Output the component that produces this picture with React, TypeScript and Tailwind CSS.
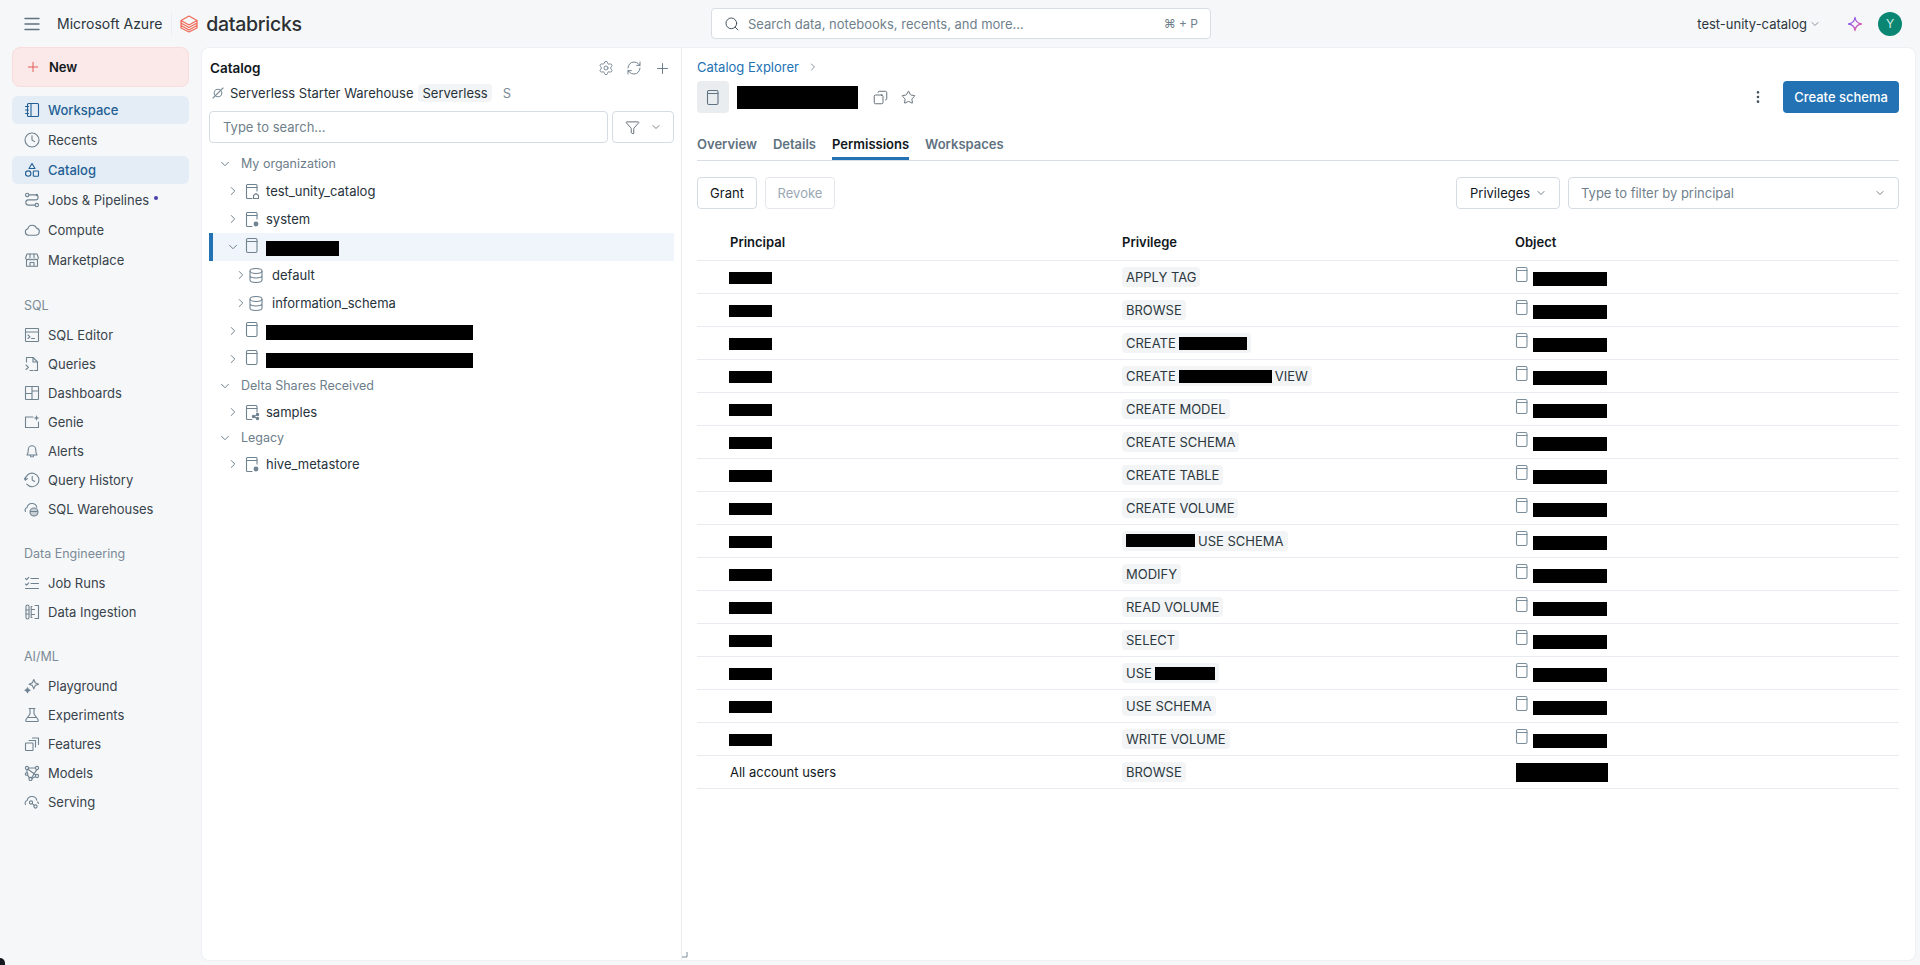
import React from "react";
import { ChevronDown, ChevronRight, Search, Settings, RefreshCw, Plus, Filter, Copy, Star, EllipsisVertical } from "lucide-react";

type IP = { className?: string };
const Svg = ({ className = "", children, size = 16 }: IP & { children: React.ReactNode; size?: number }) => (
  <svg width={size} height={size} viewBox="0 0 16 16" fill="none" stroke="currentColor" strokeWidth={1.1} strokeLinecap="round" strokeLinejoin="round" className={`shrink-0 ${className}`}>
    {children}
  </svg>
);

const I: Record<string, React.ReactNode> = {
  workspace: (<><rect x="3.5" y="1.5" width="11" height="13" rx="1" /><path d="M7 1.5v13M1.5 4.5h3M1.5 8h3M1.5 11.5h3" /></>),
  recents: (<><circle cx="8" cy="8" r="7" /><path d="M8 3.8V8l2.6 1.6" /></>),
  catalog: (<><path d="M8 1.5l3 5H5z" /><circle cx="4.2" cy="11.6" r="2.7" /><rect x="9.3" y="9" width="5.2" height="5.2" rx=".5" /></>),
  jobs: (<><circle cx="3.2" cy="2.9" r="1.7" /><circle cx="12.8" cy="13.1" r="1.7" /><path d="M5 2.9h6.6a2.5 2.5 0 0 1 0 5H4.4a2.6 2.6 0 0 0 0 5.2H11" /><circle cx="12.8" cy="3" r=".6" /></>),
  compute: (<path d="M4.4 13.2a3.3 3.3 0 0 1-.5-6.5 4.5 4.5 0 0 1 8.6-.6 3.6 3.6 0 0 1-.4 7.1z" />),
  market: (<><path d="M2.5 7.5v6.8h11V7.5" /><path d="M3 2h10l1.4 3.8a1.9 1.9 0 0 1-3.2 1.3 2.3 2.3 0 0 1-3.2 0 2.3 2.3 0 0 1-3.2 0A1.9 1.9 0 0 1 1.6 5.8z" /><path d="M6 2v4M10 2v4M6 14v-3.500h4V14" /></>),
  editor: (<><rect x="1.500" y="1.500" width="13" height="13" rx=".5" /><path d="M1.500 5h13M4 8l2 1.800L4 11.500M7.500 11.500h3" /></>),
  queries: (<><path d="M2.500 6V1.500h6.500l4.500 4.500v8.500h-3" /><path d="M9 1.500V6h4.500M2 9l2.500 2.300L2 13.500M6 14.500h3" /></>),
  dashboards: (<><rect x="1.500" y="1.500" width="13" height="13" rx=".5" /><path d="M8 1.500v13M1.500 8.500H8M8 6h6.500" /></>),
  genie: (<><path d="M9 3H1.500v10.500h13V8" /><path d="M12.500 1l.8 2.200 2.200.8-2.200.8-.8 2.200-.8-2.200-2.200-.8 2.200-.8z" fill="currentColor" stroke="none" /></>),
  alerts: (<><path d="M3 12c1-1 1.300-2.200 1.300-5.500a3.700 3.700 0 0 1 7.400 0c0 3.300.3 4.500 1.300 5.500z" /><path d="M6.200 12.200a1.800 1.800 0 0 0 3.600 0" /></>),
  history: (<><path d="M1.300 8a6.800 6.800 0 1 1 1.500 4.200" /><path d="M0 6l1.400 2 2-1.400M8.200 4.400V8l2.500 1.400" /></>),
  warehouses: (<><path d="M1.500 10.500a2.700 2.700 0 0 1 1.600-4 5 5 0 0 1 9.700-.4" /><circle cx="10" cy="11" r="4" fill="currentColor" fillOpacity=".35" /><path d="M6.500 10.500h7" /></>),
  jobruns: (<path d="M1.500 3.500l1.200 1.200 2-2.300M1.500 9l1.200 1.200 2-2.300M7 3.500h7.500M7 8.500h7.500M1.500 13.500h13" />),
  ingestion: (<><path d="M2 2.500a1.500 1.500 0 0 1 3 0v11a1.500 1.500 0 0 1-3 0zM1.700 6h3.600M1.700 10h3.600M8 2.500h-.8v11H8M11 1.500h3.500v13H11" /><path d="M7.500 5.500h3M7.500 10.500h3" /></>),
  playground: (<><path d="M9.800 1.500l1.400 3.300 3.300 1.400-3.300 1.400-1.400 3.300-1.400-3.300-3.300-1.400 3.300-1.400z" /><path d="M3.500 9.800l.8 1.700 1.700.8-1.700.8-.8 1.700-.8-1.700-1.700-.8 1.700-.8z" fill="currentColor" /></>),
  experiments: (<><path d="M5 1.500h6M6 1.500v5.500L2 12.500c-.7 1.100-.1 2 1 2h10c1.100 0 1.700-.9 1-2L10 7V1.500" /><path d="M3.500 10.500h9" /></>),
  features: (<><rect x="1.500" y="7" width="7.500" height="7.500" rx=".5" /><path d="M5 4.500h6.500V11M8.500 2h6v6.500" /></>),
  models: (<><circle cx="3" cy="3" r="1.600" /><circle cx="13" cy="3" r="1.600" /><circle cx="13" cy="11" r="1.600" /><circle cx="6.500" cy="14" r="1.600" /><circle cx="2.600" cy="9" r="1.300" /><path d="M4.600 3h6.800M4 4.200l7.800 5.800M12.800 4.600L7.600 12.800M3 7.700V4.600M3.500 10.200l2 2.600M8 13.500l3.500-1.900" /></>),
  serving: (<><path d="M1.500 10.500a2.700 2.700 0 0 1 1.600-4 5 5 0 0 1 9.700-.4" /><circle cx="7" cy="8.500" r="1.600" /><circle cx="11.500" cy="12.500" r="1.600" /><path d="M8.200 9.700l2 1.700M14.500 9.500a2 2 0 0 0-1-1.500" /></>),
};

const NavItem = ({ icon, label, active, dot, h }: { icon: string; label: string; active?: boolean; dot?: boolean; h: string }) => (
  <div className={`${h} flex items-center`}>
    <div className={`flex h-[28px] w-full items-center gap-[8px] rounded-[6px] pl-[12px] ${active ? "bg-[#e4edf5] text-[#235f94]" : "text-[#38434b]"}`}>
      <span className={active ? "text-[#235f94]" : "text-[#6f8290]"}><Svg>{I[icon]}</Svg></span>
      <span className={active ? "font-medium" : ""}>{label}</span>
      {dot && <span className="ml-[-3px] mt-[-4px] h-[4px] w-[4px] rounded-full bg-[#4b3fb0]" />}
    </div>
  </div>
);

const SectionLabel = ({ children }: { children: React.ReactNode }) => (
  <div className="flex h-[29px] items-center pl-[12px] text-[12.500px] text-[#7b8a96]">{children}</div>
);

const Bar = ({ w, h = 14, className = "" }: { w: number; h?: number; className?: string }) => (
  <span className={`inline-block shrink-0 bg-black ${className}`} style={{ width: w, height: h }} />
);

const CatalogIcon = ({ badge, className = "" }: { badge?: "home" | "gear" | "share"; className?: string }) => (
  <svg width="16" height="17" viewBox="0 0 16 17" fill="none" stroke="currentColor" strokeWidth={1.1} strokeLinecap="round" strokeLinejoin="round" className={`shrink-0 text-[#6f8290] ${className}`}>
    {badge ? <path d="M8 15.500H3.500a1 1 0 0 1-1-1V2.500a1 1 0 0 1 1-1h8.500a1 1 0 0 1 1 1V8" /> : <rect x="2.500" y="1.500" width="10.500" height="14" rx="1.500" />}
    <path d="M2.500 4.500h10.500" />
    {badge === "home" && <path d="M9.500 15.500v-3l2.500-2 2.500 2v3z" />}
    {badge === "gear" && <circle cx="12" cy="13" r="1.900" fill="currentColor" />}
    {badge === "share" && <><circle cx="13.500" cy="10.500" r="1.200" fill="currentColor" /><circle cx="13.500" cy="14.500" r="1.200" fill="currentColor" /><circle cx="9.500" cy="12.500" r="1.200" fill="currentColor" /><path d="M13 11l-3 1.500 3 2" /></>}
  </svg>
);

const DbIcon = () => (
  <svg width="16" height="17" viewBox="0 0 16 17" fill="none" stroke="currentColor" strokeWidth={1.1} className="shrink-0 text-[#6f8290]">
    <ellipse cx="8" cy="4" rx="6" ry="2.500" />
    <path d="M2 4v9c0 1.400 2.700 2.500 6 2.500s6-1.100 6-2.500V4M2 8.500c0 1.400 2.700 2.500 6 2.500s6-1.100 6-2.500" />
  </svg>
);

const Tree = ({ indent, open, icon, children, h = "h-[28px]", selected }: { indent: string; open?: boolean; icon: React.ReactNode; children: React.ReactNode; h?: string; selected?: boolean }) => (
  <div className={`${h} flex items-center ${indent} ${selected ? "border-l-[4px] border-[#2272b4] bg-[#eff5fa]" : ""}`}>
    {open ? <ChevronDown size={14} strokeWidth={1.500} className="text-[#5f7281]" /> : <ChevronRight size={14} strokeWidth={1.500} className="text-[#5f7281]" />}
    {icon}
    {children}
  </div>
);

const Heading = ({ children }: { children: React.ReactNode }) => (
  <div className="flex h-[26px] items-center gap-[9px] pl-[9px] text-[12.500px] text-[#6d7d8a]">
    <ChevronDown size={14} strokeWidth={1.500} className="text-[#5f7281]" />
    {children}
  </div>
);

type Part = string | number;
const rows: { chip: Part[]; noIcon?: boolean }[] = [
  { chip: ["APPLY TAG"] },
  { chip: ["BROWSE"] },
  { chip: ["CREATE", 68] },
  { chip: ["CREATE", 93, "VIEW"] },
  { chip: ["CREATE MODEL"] },
  { chip: ["CREATE SCHEMA"] },
  { chip: ["CREATE TABLE"] },
  { chip: ["CREATE VOLUME"] },
  { chip: [69, "USE SCHEMA"] },
  { chip: ["MODIFY"] },
  { chip: ["READ VOLUME"] },
  { chip: ["SELECT"] },
  { chip: ["USE", 60] },
  { chip: ["USE SCHEMA"] },
  { chip: ["WRITE VOLUME"] },
  { chip: ["BROWSE"], noIcon: true },
];

const Row = ({ chip, noIcon }: { chip: Part[]; noIcon?: boolean }) => (
  <div className="grid h-[33px] grid-cols-[425px_393px_1fr] items-center border-b border-[#e8ecf0]">
    <div className="pl-[32px]">
      {noIcon ? <span className="ml-[1px]">All account users</span> : <Bar w={43} h={12} className="mt-[6px] block" />}
    </div>
    <div>
      <span className="inline-flex h-[20px] items-center gap-[3px] rounded-[4px] bg-[#f2f4f6] px-[4px] text-[#2c3840]">
        {chip.map((p, i) => (typeof p === "number" ? <Bar key={i} w={p} h={13} /> : <span key={i}>{p}</span>))}
      </span>
    </div>
    <div className="flex items-center">
      {noIcon ? <Bar w={92} h={19} className="ml-[1px]" /> : <><CatalogIcon className="ml-[-1px] mt-[-6px] !text-[#7c8e9b]" /><Bar w={74} h={14} className="ml-[3px] mt-[3px]" /></>}
    </div>
  </div>
);

export default function App() {
  return (
    <div className="relative flex h-[965px] w-[1920px] flex-col overflow-hidden bg-[#f6f7f9] text-[13px] leading-[18px] text-[#11171c]" style={{ fontFamily: "Inter, 'Noto Sans', sans-serif" }}>
      <header className="flex h-[47px] shrink-0 items-center">
        <div className="flex w-[700px] items-center pl-[24px]">
          <svg width="16" height="14" viewBox="0 0 16 14" fill="none" stroke="#5f7281" strokeWidth={1.400} strokeLinecap="round" className="shrink-0"><path d="M1 1.500h14M1 7h14M1 12.500h14" /></svg>
          <span className="ml-[17px] text-[14px] text-[#2b353c]">Microsoft Azure</span>
          <span className="ml-[9px] h-[24px] w-px bg-[#eceff2]" />
          <svg width="18" height="18" viewBox="0 0 18 18" fill="none" stroke="#ef6a57" strokeWidth={1.200} strokeLinejoin="round" className="ml-[8px] shrink-0"><path d="M9 1L17 5.500 9 10 1 5.500zM1 5.500v2.500l8 4.500 8-4.500V5.500M1 8v2.500L9 15l8-4.500V8M1 10.500V13l8 4 8-4v-2.500" /></svg>
          <span className="ml-[8px] text-[19.500px] font-medium tracking-[-0.300px] text-[#2b2f33]">databricks</span>
        </div>
        <div className="ml-[11px] flex h-[31px] w-[500px] items-center rounded-[4px] border border-[#d8dee4] bg-white pl-[12px] pr-[12px] text-[#6f7f8c]">
          <Search size={16} strokeWidth={1.500} className="text-[#45535e]" />
          <span className="ml-[8px] flex-1">Search data, notebooks, recents, and more...</span>
          <span className="text-[12px]">⌘ + P</span>
        </div>
        <div className="ml-auto flex items-center pr-[18px]">
          <span className="text-[#2b353c]">test-unity-catalog</span>
          <ChevronDown size={12} strokeWidth={1.500} className="ml-[2px] text-[#5f7281]" />
          <svg width="16" height="16" viewBox="0 0 16 16" fill="none" strokeWidth={1.300} strokeLinejoin="round" className="ml-[26px]">
            <defs><linearGradient id="sp" x1="2" y1="2" x2="14" y2="14" gradientUnits="userSpaceOnUse"><stop offset="0" stopColor="#6a5cf0" /><stop offset=".5" stopColor="#b45ad8" /><stop offset="1" stopColor="#ef5a8a" /></linearGradient></defs>
            <path d="M8 1.500C8.500 5.500 10.500 7.500 14.500 8 10.500 8.500 8.500 10.500 8 14.500 7.500 10.500 5.500 8.500 1.500 8 5.500 7.500 7.500 5.500 8 1.500z" stroke="url(#sp)" />
          </svg>
          <span className="ml-[15px] flex h-[24px] w-[24px] items-center justify-center rounded-full bg-[#0a8673] text-[12px] text-[#d5efe9]">Y</span>
        </div>
      </header>
      <div className="flex min-h-0 flex-1 pb-[4px] pr-[4px]">
        <aside className="w-[201px] shrink-0 px-[12px]">
          <div className="flex h-[40px] items-center gap-[8px] rounded-[8px] border border-[#fbdcdc] bg-[#fbe8e8] pl-[12px] font-semibold">
            <Plus size={16} strokeWidth={1.400} className="text-[#e2554f]" />
            <span>New</span>
          </div>
          <div className="mt-[8px]">
            <NavItem h="h-[30px]" icon="workspace" label="Workspace" active />
            <NavItem h="h-[30px]" icon="recents" label="Recents" />
            <NavItem h="h-[30px]" icon="catalog" label="Catalog" active />
            <NavItem h="h-[30px]" icon="jobs" label="Jobs & Pipelines" dot />
            <NavItem h="h-[30px]" icon="compute" label="Compute" />
            <NavItem h="h-[30px]" icon="market" label="Marketplace" />
          </div>
          <div className="mt-[16px]"><SectionLabel>SQL</SectionLabel></div>
          <NavItem h="h-[29px]" icon="editor" label="SQL Editor" />
          <NavItem h="h-[29px]" icon="queries" label="Queries" />
          <NavItem h="h-[29px]" icon="dashboards" label="Dashboards" />
          <NavItem h="h-[29px]" icon="genie" label="Genie" />
          <NavItem h="h-[29px]" icon="alerts" label="Alerts" />
          <NavItem h="h-[29px]" icon="history" label="Query History" />
          <NavItem h="h-[29px]" icon="warehouses" label="SQL Warehouses" />
          <div className="mt-[16px]"><SectionLabel>Data Engineering</SectionLabel></div>
          <NavItem h="h-[29px]" icon="jobruns" label="Job Runs" />
          <NavItem h="h-[29px]" icon="ingestion" label="Data Ingestion" />
          <div className="mt-[16px]"><SectionLabel>AI/ML</SectionLabel></div>
          <NavItem h="h-[29px]" icon="playground" label="Playground" />
          <NavItem h="h-[29px]" icon="experiments" label="Experiments" />
          <NavItem h="h-[29px]" icon="features" label="Features" />
          <NavItem h="h-[29px]" icon="models" label="Models" />
          <NavItem h="h-[29px]" icon="serving" label="Serving" />
        </aside>
        <div className="flex min-w-0 flex-1 rounded-[8px] border border-[#eef0f3] bg-white">
          <section className="relative w-[480px] shrink-0 border-r border-[#eaedf0] px-[7px]">
            <div className="flex h-[28px] items-center justify-between pl-[1px] pr-[3px] pt-[12px]">
              <span className="text-[13.500px] font-semibold">Catalog</span>
              <span className="flex items-center gap-[12px] text-[#5f7281]">
                <Settings size={16} strokeWidth={1.200} />
                <RefreshCw size={16} strokeWidth={1.300} />
                <Plus size={17} strokeWidth={1.300} />
              </span>
            </div>
            <div className="mt-[8px] flex h-[18px] items-center pl-[3px] text-[#27323a]">
              <svg width="12" height="12" viewBox="0 0 12 12" fill="none" stroke="#7c8e9b" strokeWidth={1.100} strokeLinecap="round" className="shrink-0"><circle cx="6" cy="6" r="3.800" /><path d="M1 11L11 1" /></svg>
              <span className="ml-[6px]">Serverless Starter Warehouse</span>
              <span className="ml-[5px] rounded-[4px] bg-[#f2f4f6] px-[4px]">Serverless</span>
              <span className="ml-[11px] text-[#7b8a96]">S</span>
            </div>
            <div className="mt-[9px] flex h-[32px] gap-[4px]">
              <div className="flex flex-1 items-center rounded-[4px] border border-[#d5dce3] pl-[13px] text-[#6f7f8c]">Type to search...</div>
              <div className="flex w-[62px] items-center justify-center gap-[10px] rounded-[4px] border border-[#d5dce3]">
                <Filter size={15} strokeWidth={1.300} className="text-[#45535e]" />
                <ChevronDown size={12} strokeWidth={1.500} className="text-[#45535e]" />
              </div>
            </div>
            <div className="mt-[8px] text-[#27323a]">
              <Heading>My organization</Heading>
              <Tree indent="pl-[17px]" icon={<CatalogIcon badge="home" className="ml-[4px] mr-[6px]" />}>test_unity_catalog</Tree>
              <Tree indent="pl-[17px]" icon={<CatalogIcon badge="gear" className="ml-[4px] mr-[6px]" />}>system</Tree>
              <Tree indent="pl-[13px]" open selected icon={<CatalogIcon className="ml-[4px] mr-[6px] mt-[-4px]" />}><Bar w={73} h={15} className="mt-[2px]" /></Tree>
              <Tree indent="pl-[25px]" icon={<DbIcon />}><span className="ml-[8px]">default</span></Tree>
              <Tree indent="pl-[25px]" icon={<DbIcon />}><span className="ml-[8px]">information_schema</span></Tree>
              <Tree indent="pl-[17px]" icon={<CatalogIcon className="ml-[4px] mr-[6px] mt-[-3px]" />}><Bar w={207} h={15} className="mt-[2px]" /></Tree>
              <Tree indent="pl-[17px]" icon={<CatalogIcon className="ml-[4px] mr-[6px] mt-[-3px]" />}><Bar w={207} h={15} className="mt-[2px]" /></Tree>
              <Heading>Delta Shares Received</Heading>
              <Tree indent="pl-[17px]" h="h-[26px]" icon={<CatalogIcon badge="share" className="ml-[4px] mr-[6px]" />}>samples</Tree>
              <Heading>Legacy</Heading>
              <Tree indent="pl-[17px]" h="h-[26px]" icon={<CatalogIcon badge="gear" className="ml-[4px] mr-[6px]" />}>hive_metastore</Tree>
            </div>
          </section>
          <main className="relative min-w-0 flex-1 pl-[15px] pr-[16px]">
            <div className="flex h-[18px] items-center gap-[8px] mt-[10px] text-[#2272b4]">
              <span>Catalog Explorer</span>
              <ChevronRight size={12} strokeWidth={1.500} className="text-[#5f7281]" />
            </div>
            <div className="mt-[5px] flex h-[32px] items-center">
              <div className="flex h-[32px] w-[32px] items-center justify-center rounded-[4px] bg-[#eaedf0] text-[#5f7281]"><CatalogIcon className="!text-[#5f7281]" /></div>
              <Bar w={121} h={23} className="ml-[8px]" />
              <Copy size={15} strokeWidth={1.300} className="ml-[15px] text-[#45535e] scale-x-[-1]" />
              <Star size={15} strokeWidth={1.300} className="ml-[13px] text-[#45535e]" />
              <EllipsisVertical size={16} strokeWidth={2} className="ml-auto mr-[17px] text-[#45535e]" />
              <div className="flex h-[32px] w-[116px] items-center justify-center rounded-[4px] bg-[#2272b4] font-medium text-white">Create schema</div>
            </div>
            <div className="mt-[14px] flex h-[34px] gap-[16px] border-b border-[#d8dee4] font-semibold text-[#5f7281]">
              <span className="flex items-center">Overview</span>
              <span className="flex items-center">Details</span>
              <span className="flex items-center border-b-[3px] border-[#2272b4] pt-[3px] text-[#11171c]">Permissions</span>
              <span className="flex items-center">Workspaces</span>
            </div>
            <div className="mt-[16px] flex h-[32px] items-stretch gap-[8px]">
              <div className="flex w-[60px] items-center justify-center rounded-[4px] border border-[#d5dce3]">Grant</div>
              <div className="flex w-[70px] items-center justify-center rounded-[4px] border border-[#e4e8ec] text-[#9aa8b3]">Revoke</div>
              <div className="ml-auto flex w-[104px] items-center justify-between rounded-[4px] border border-[#d5dce3] pl-[13px] pr-[12px]">Privileges<ChevronDown size={12} strokeWidth={1.500} className="text-[#45535e]" /></div>
              <div className="flex w-[331px] items-center justify-between rounded-[4px] border border-[#d5dce3] pl-[12px] pr-[12px] text-[#6f7f8c]">Type to filter by principal<ChevronDown size={12} strokeWidth={1.500} className="text-[#45535e]" /></div>
            </div>
            <div className="grid h-[52px] grid-cols-[425px_393px_1fr] items-end border-b border-[#e8ecf0] pb-[9px] font-semibold">
              <span className="pl-[33px]">Principal</span>
              <span>Privilege</span>
              <span>Object</span>
            </div>
            {rows.map((r, i) => <Row key={i} chip={r.chip} noIcon={r.noIcon} />)}
            <svg width="8" height="8" viewBox="0 0 8 8" fill="none" stroke="#7c8e9b" strokeWidth={1} className="absolute bottom-[1px] left-[-1px]"><path d="M6 1v5H1" /></svg>
          </main>
        </div>
      </div>
      <span className="absolute bottom-0 left-0 h-[7px] w-[5px] rounded-tr-[5px] bg-[#14181f]" />
    </div>
  );
}
